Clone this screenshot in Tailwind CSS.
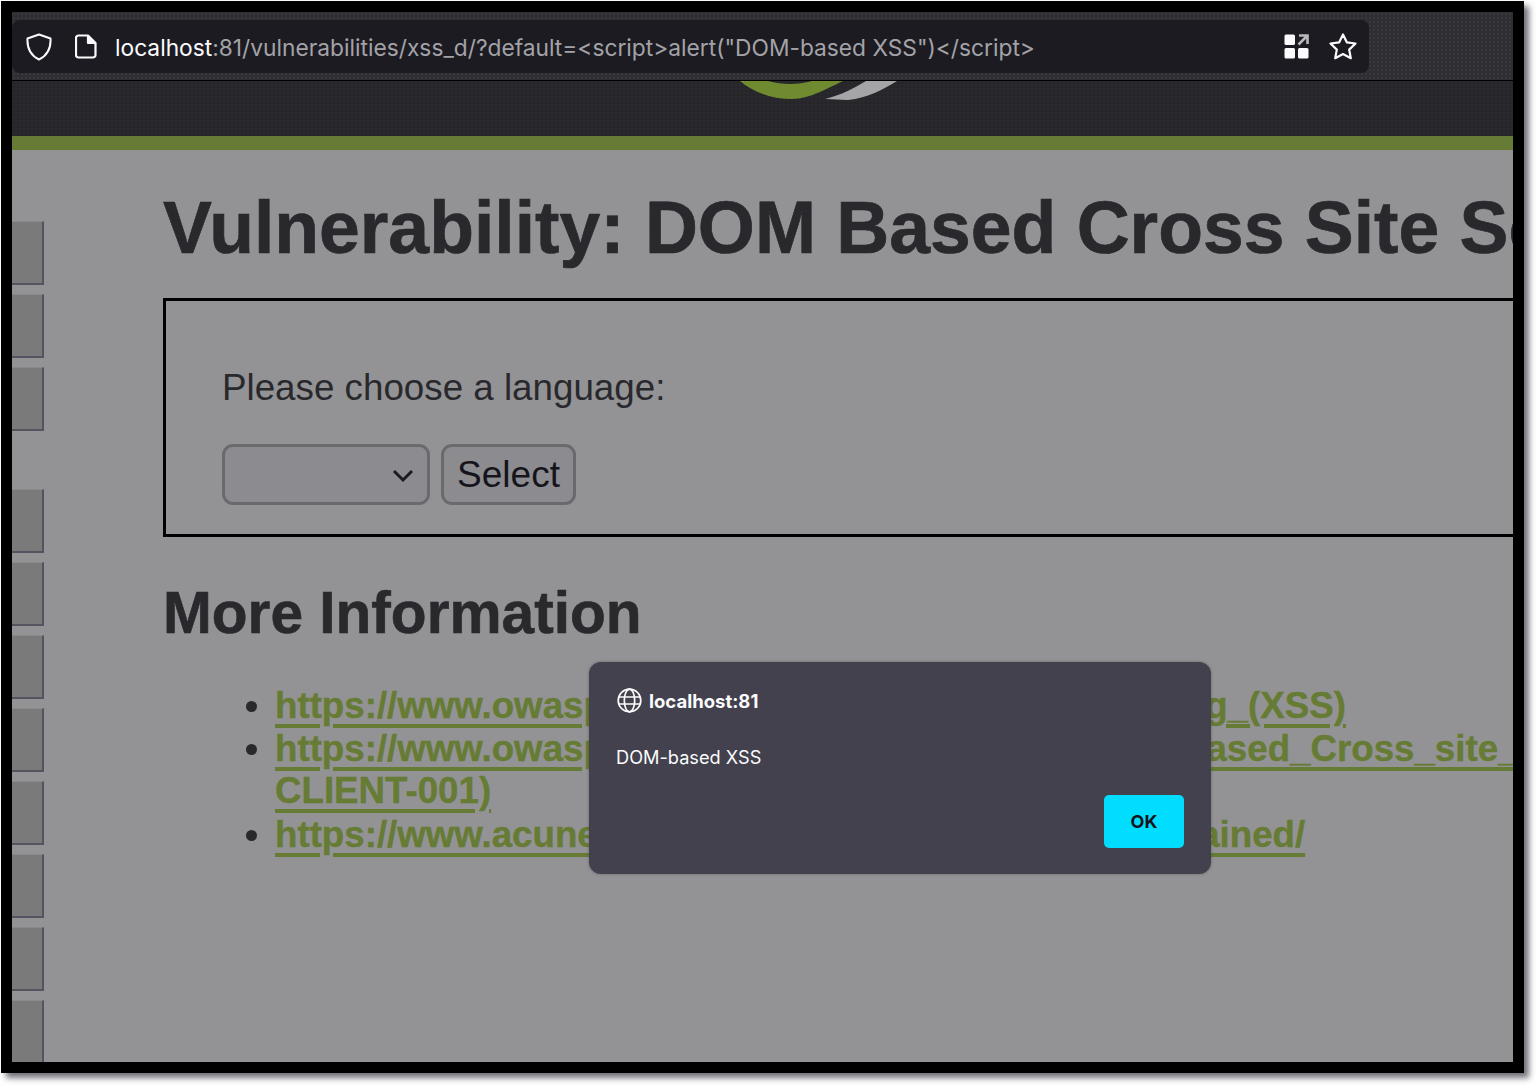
<!DOCTYPE html>
<html lang="en">
<head>
    <meta charset="UTF-8">
    <title>Vulnerability: DOM Based Cross Site Scripting</title>
    <script src="https://cdn.jsdelivr.net/npm/@tailwindcss/browser@4"></script>
</head>
<body class="bg-white w-[1536px] h-[1086px] overflow-hidden pl-px pt-px">
    <div class="relative w-[1523px] h-[1072px] border-[11px] border-black bg-[#939395] overflow-hidden shadow-[5px_5px_6px_rgba(40,38,50,0.65)] font-['Liberation_Sans',sans-serif]">
        <!-- browser toolbar -->
        <div class="h-[69px] bg-[#2f2f33] bg-[radial-gradient(#444448_0.6px,transparent_0.8px)] bg-[size:4px_4px] border-b border-black pt-2">
            <div class="w-[1357px] h-[53px] bg-[#1c1b22] rounded-lg flex items-center pl-[14px] pr-[12px] font-['Inter',sans-serif] text-[22.75px]">
                <svg class="w-[26px] h-[28px] shrink-0" viewBox="0 0 26 28" fill="none" stroke="#fbfbfe" stroke-width="2"><path d="M13 1.5 L24.5 5.5 C25 14 22 22 13 26.5 C4 22 1 14 1.5 5.5 Z" stroke-linejoin="round"/></svg>
                <svg class="ml-[23px] w-[22px] h-[25px] shrink-0" viewBox="0 0 22 25" fill="none" stroke="#fbfbfe" stroke-width="2.2" stroke-linejoin="round"><path d="M3.5 1.5 H13 L20.5 9 V21 A2.5 2.5 0 0 1 18 23.5 H3.5 A2.5 2.5 0 0 1 1 21 V4 A2.5 2.5 0 0 1 3.5 1.5 Z"/><path d="M13 1.5 V9 H20.5" fill="#fbfbfe"/></svg>
                <div class="ml-[18px] mt-[4px] whitespace-nowrap text-[#a3a3a7]"><span class="text-[#fbfbfe]">localhost</span>:81/vulnerabilities/xss_d/?default=&lt;script&gt;alert("DOM-based XSS")&lt;/script&gt;</div>
                <svg class="ml-auto w-[25px] h-[25px] shrink-0" viewBox="0 0 25 25"><rect x="0.5" y="0.5" width="10.5" height="10.5" rx="1.5" fill="#fbfbfe"/><rect x="0.5" y="14" width="10.5" height="10.5" rx="1.5" fill="#fbfbfe"/><rect x="14" y="14" width="10.5" height="10.5" rx="1.5" fill="#fbfbfe"/><path d="M15 1.5 H23.5 V10 M23 2 L14.5 10.5" fill="none" stroke="#b9b9bb" stroke-width="2.6"/></svg>
                <svg class="ml-[20px] w-[28px] h-[27px] shrink-0" viewBox="0 0 28 27" fill="none" stroke="#fbfbfe" stroke-width="2.2" stroke-linejoin="round"><path d="M14 1.5 L17.8 9.3 L26.5 10.5 L20.2 16.6 L21.8 25.2 L14 21 L6.2 25.2 L7.8 16.6 L1.5 10.5 L10.2 9.3 Z"/></svg>
            </div>
        </div>

        <!-- site header -->
        <div class="relative h-[55px] bg-[#29292d] bg-[radial-gradient(#1f1f23_0.6px,transparent_0.8px)] bg-[size:4px_4px]">
            <svg class="absolute left-[728px] top-0 w-[162px] h-[20px]" viewBox="0 0 162 20">
                <path d="M0 0 H103 C90 6 70 18 52 18 C30 18 12 10 0 0 Z" fill="#6f8a2f"/>
                <path d="M28 0 C42 4 58 4 72 0 Z" fill="#29292d"/>
                <path d="M85 18 C102 14 116 6 126 0 H157 C144 8 128 17 108 19 Z" fill="#a5a5a7"/>
            </svg>
        </div>
        <div class="h-[14px] bg-[#667b33]"></div>

        <div class="flex">
            <!-- side menu -->
            <div class="w-[32px] shrink-0 pt-[71px] flex flex-col">
                <div class="h-[64px] bg-[#7a7a7b] border-t border-r-2 border-b-2 border-t-[#8a8a8b] border-r-[#55535f] border-b-[#55535f]"></div>
                <div class="mt-[9px] h-[64px] bg-[#7a7a7b] border-t border-r-2 border-b-2 border-t-[#8a8a8b] border-r-[#55535f] border-b-[#55535f]"></div>
                <div class="mt-[9px] h-[64px] bg-[#7a7a7b] border-t border-r-2 border-b-2 border-t-[#8a8a8b] border-r-[#55535f] border-b-[#55535f]"></div>
                <div class="mt-[58px] h-[64px] bg-[#7a7a7b] border-t border-r-2 border-b-2 border-t-[#8a8a8b] border-r-[#55535f] border-b-[#55535f]"></div>
                <div class="mt-[9px] h-[64px] bg-[#7a7a7b] border-t border-r-2 border-b-2 border-t-[#8a8a8b] border-r-[#55535f] border-b-[#55535f]"></div>
                <div class="mt-[9px] h-[64px] bg-[#7a7a7b] border-t border-r-2 border-b-2 border-t-[#8a8a8b] border-r-[#55535f] border-b-[#55535f]"></div>
                <div class="mt-[9px] h-[64px] bg-[#7a7a7b] border-t border-r-2 border-b-2 border-t-[#8a8a8b] border-r-[#55535f] border-b-[#55535f]"></div>
                <div class="mt-[9px] h-[64px] bg-[#7a7a7b] border-t border-r-2 border-b-2 border-t-[#8a8a8b] border-r-[#55535f] border-b-[#55535f]"></div>
                <div class="mt-[9px] h-[64px] bg-[#7a7a7b] border-t border-r-2 border-b-2 border-t-[#8a8a8b] border-r-[#55535f] border-b-[#55535f]"></div>
                <div class="mt-[9px] h-[64px] bg-[#7a7a7b] border-t border-r-2 border-b-2 border-t-[#8a8a8b] border-r-[#55535f] border-b-[#55535f]"></div>
                <div class="mt-[9px] h-[64px] bg-[#7a7a7b] border-t border-r-2 border-t-[#8a8a8b] border-r-[#55535f]"></div>
            </div>

            <!-- main body -->
            <div class="ml-[119px] w-[1400px] shrink-0">
                <h1 class="mt-[39px] h-[78px] text-[73.3px] leading-[78px] font-bold text-[#29292d] whitespace-nowrap [-webkit-text-stroke:0.7px_#29292d]">Vulnerability: DOM Based Cross Site Scripting</h1>
                <div class="mt-[31px] h-[239px] border-[3px] border-black pl-[56px] pt-[65px]">
                    <div class="text-[36.75px] leading-[44px] text-[#29292d]">Please choose a language:</div>
                    <div class="mt-[34px] flex gap-[11px]">
                        <div class="w-[208px] h-[61px] rounded-[11px] border-[3px] border-[#69696e] bg-[#8c8b90] flex items-center justify-end pr-[13px] pt-[2px]">
                            <svg class="w-[22px] h-[14px]" viewBox="0 0 22 14" fill="none" stroke="#1c1b22" stroke-width="3"><path d="M2 2 L11 11 L20 2"/></svg>
                        </div>
                        <div class="w-[135px] h-[61px] rounded-[11px] border-[3px] border-[#69696e] bg-[#8c8b90] flex items-center justify-center text-[37px] text-[#15141a]">Select</div>
                    </div>
                </div>
                <h2 class="mt-[41px] h-[70px] text-[58.6px] leading-[70px] font-bold text-[#29292d] whitespace-nowrap [-webkit-text-stroke:0.6px_#29292d]">More Information</h2>
                <ul class="mt-[37px] pl-[112px] list-disc text-[36.7px] leading-[42.5px] font-bold text-[#667b33] whitespace-nowrap marker:text-[#29292d] [-webkit-text-stroke:0.4px_#667b33]">
                    <li><a class="underline decoration-4 underline-offset-[6px]">https://www.owasp.org/index.php/Cross-site_Scripting_(XSS)</a></li>
                    <li><a class="underline decoration-4 underline-offset-[6px]">https://www.owasp.org/index.php/Testing_for_DOM-based_Cross_site_scripting_(OTG-<br>CLIENT-001)</a></li>
                    <li class="mt-px"><a class="underline decoration-4 underline-offset-[6px]">https://www.acunetix.com/blog/articles/dom-xss-explained/</a></li>
                </ul>
            </div>
        </div>

        <!-- alert dialog -->
        <div class="absolute left-[577px] top-[650px] w-[622px] h-[212px] rounded-xl bg-[#42414d] font-['Inter',sans-serif] text-[#fbfbfe] shadow-[0_0_3px_rgba(60,60,70,0.5)]">
            <div class="absolute left-[28px] top-[26px] flex items-center gap-[7px]">
                <svg class="w-[25px] h-[25px]" viewBox="0 0 25 25" fill="none" stroke="#fbfbfe" stroke-width="1.7"><circle cx="12.5" cy="12.5" r="11.3"/><ellipse cx="12.5" cy="12.5" rx="5.2" ry="11.3"/><path d="M1.5 9 H23.5 M1.5 16 H23.5"/></svg>
                <span class="text-[18.5px] leading-[24px] font-bold">localhost:81</span>
            </div>
            <div class="absolute left-[27px] top-[83px] text-[18.2px] leading-[24px]">DOM-based XSS</div>
            <div class="absolute left-[515px] top-[133px] w-[80px] h-[53px] rounded-[5px] bg-[#00ddff] flex items-center justify-center text-[#15141a] text-[18px] font-bold">OK</div>
        </div>
    </div>
</body>
</html>
